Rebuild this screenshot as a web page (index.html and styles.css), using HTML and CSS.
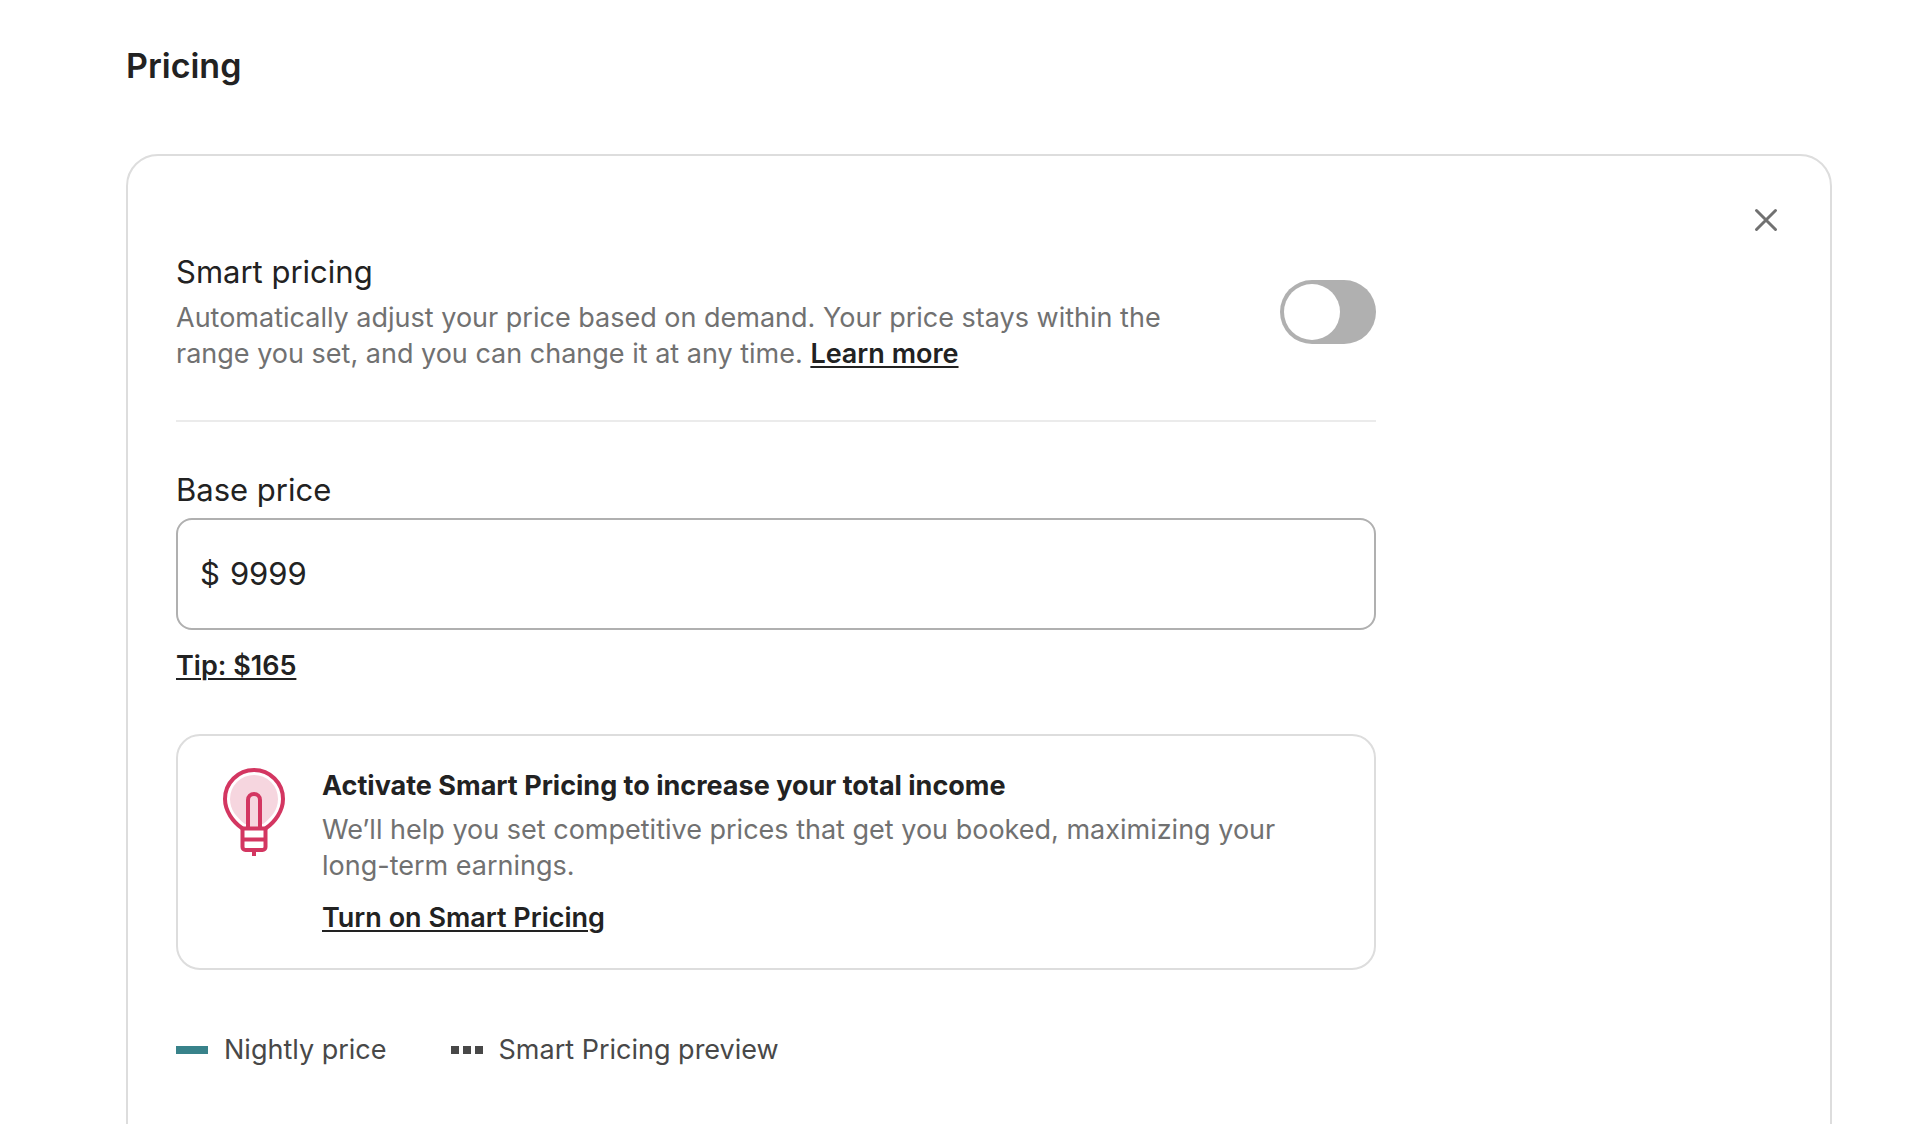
FILE: index.html
```html
<!DOCTYPE html>
<html lang="en">
<head>
<meta charset="utf-8">
<meta name="viewport" content="width=device-width, initial-scale=1">
<title>Pricing</title>
<link rel="stylesheet" href="styles.css">
</head>
<body>
<main class="page">
  <h1 class="page-title">Pricing</h1>

  <section class="card">
    <div class="card-actions">
      <button class="close" type="button" aria-label="Close">
        <svg viewBox="0 0 32 32" width="32" height="32" aria-hidden="true">
          <path d="M6.500 6.500l19 19M25.500 6.500l-19 19" fill="none" stroke="#717171" stroke-width="3" stroke-linecap="round"/>
        </svg>
      </button>
    </div>

    <div class="content">
      <div class="setting">
        <div class="setting-text">
          <h2 class="label"><label for="smart">Smart pricing</label></h2>
          <p class="hint">Automatically adjust your price based on demand. Your price stays within the range you set, and you can change it at any time. <a class="link" href="#">Learn more</a></p>
        </div>
        <input class="switch" id="smart" type="checkbox" role="switch">
      </div>

      <div class="field">
        <label class="label" for="price">Base price</label>
        <div class="price-box">
          <span>$</span>
          <input class="price" id="price" type="text" inputmode="numeric" value="9999">
        </div>
        <button class="link tip" type="button">Tip: $165</button>
      </div>

      <section class="callout">
        <svg class="bulb" viewBox="0 0 64 90" width="64" height="90" aria-hidden="true">
          <path d="M32 7a24 24 0 0 1 24 24c0 11-7 19-15 25H23C15 50 8 42 8 31A24 24 0 0 1 32 7z" fill="#f6d6df"/>
          <path d="M26 60V32a6 6 0 0 1 12 0v28z" fill="#f6d6df"/>
          <g fill="none" stroke="#d33661" stroke-width="4">
            <path d="M20.500 60.500C11 54 3 43 3 31a29 29 0 0 1 58 0c0 12-8 23-17.500 29.500"/>
            <path d="M26 60V32a6 6 0 0 1 12 0v28"/>
            <path d="M20.500 60.500h23V79a3 3 0 0 1-3 3h-17a3 3 0 0 1-3-3zM20.500 71.500h23M32 82v6"/>
          </g>
        </svg>
        <div>
          <h3 class="callout-title">Activate Smart Pricing to increase your total income</h3>
          <p class="hint">We’ll help you set competitive prices that get you booked, maximizing your long-term earnings.</p>
          <button class="link callout-link" type="button">Turn on Smart Pricing</button>
        </div>
      </section>

      <ul class="legend">
        <li><span class="swatch"></span>Nightly price</li>
        <li><span class="swatch dotted"></span>Smart Pricing preview</li>
      </ul>
    </div>
  </section>
</main>
</body>
</html>
```
FILE: styles.css
```css
* {
  box-sizing: border-box;
  margin: 0;
  padding: 0;
}

body {
  background: #fff;
  color: #222;
  font: 400 27px/36px Inter, "Liberation Sans", sans-serif;
}

button,
input {
  font: inherit;
  color: inherit;
  border: 0;
  background: none;
}

button {
  cursor: pointer;
}

.page {
  height: 100vh;
  overflow-y: auto;
  scrollbar-width: none;
  padding: 44px 78px 0 126px;
}

.page-title {
  font-size: 34px;
  line-height: 44px;
  font-weight: 600;
  margin-bottom: 66px;
}

.card {
  border: 2px solid #ddd;
  border-radius: 32px;
  padding: 48px 48px 96px;
}

.card-actions {
  display: flex;
  justify-content: flex-end;
  margin-bottom: 16px;
}

.close {
  width: 32px;
  height: 32px;
}

.close svg {
  display: block;
}

.content {
  max-width: 1200px;
}

.setting {
  display: flex;
  align-items: center;
  justify-content: space-between;
  gap: 96px;
  padding-bottom: 48px;
  border-bottom: 2px solid #ebebeb;
}

.label {
  display: block;
  font-size: 31px;
  line-height: 40px;
  font-weight: 400;
  margin-bottom: 8px;
}

.hint {
  color: #717171;
}

.link {
  color: #222;
  font-weight: 600;
  text-decoration: underline;
  text-decoration-thickness: 2px;
  text-underline-offset: 3px;
}

.switch {
  appearance: none;
  flex: none;
  display: flex;
  width: 96px;
  height: 64px;
  padding: 4px;
  border-radius: 32px;
  background: #b0b0b0;
  cursor: pointer;
}

.switch::before {
  content: "";
  width: 56px;
  height: 56px;
  border-radius: 50%;
  background: #fff;
}

.switch:checked {
  justify-content: flex-end;
  background: #222;
}

.field {
  padding: 48px 0;
}

.price-box {
  display: flex;
  align-items: center;
  gap: 10px;
  height: 112px;
  padding: 0 22px;
  border: 2px solid #b0b0b0;
  border-radius: 16px;
  font-size: 31px;
  line-height: 40px;
}

.price {
  flex: 1;
  min-width: 0;
  outline: 0;
}

.tip {
  display: block;
  margin-top: 16px;
  line-height: 40px;
}

.callout {
  display: flex;
  gap: 36px;
  padding: 32px 44px;
  border: 2px solid #ddd;
  border-radius: 24px;
}

.bulb {
  flex: none;
}

.callout-title {
  font-size: 27px;
  font-weight: 700;
  margin-bottom: 8px;
}

.callout-link {
  display: block;
  margin-top: 16px;
}

.legend {
  display: flex;
  gap: 64px;
  margin-top: 60px;
  list-style: none;
  color: #484848;
  line-height: 40px;
}

.legend li {
  display: flex;
  align-items: center;
  gap: 16px;
}

.swatch {
  width: 32px;
  height: 8px;
  background: #38828a;
}

.dotted {
  background: repeating-linear-gradient(90deg, #484848 0 8px, transparent 8px 12px);
}
```
